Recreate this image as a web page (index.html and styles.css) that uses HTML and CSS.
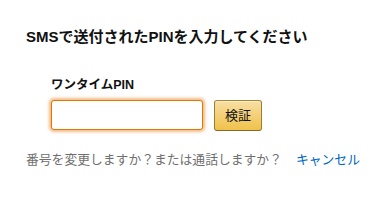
FILE: index.html
```html
<!DOCTYPE html>
<html lang="ja">
<head>
<meta charset="utf-8">
<link rel="stylesheet" href="styles.css">
</head>
<body>
<div class="page">
  <h1 class="title">SMSで送付されたPINを入力してください</h1>
  <div class="form">
    <label class="label" for="pin">ワンタイムPIN</label>
    <div class="row">
      <input id="pin" class="input" type="text">
      <button class="btn" type="button">検証</button>
    </div>
  </div>
  <p class="note">番号を変更しますか？または通話しますか？<a class="link" href="#">キャンセル</a></p>
</div>
</body>
</html>
```

FILE: styles.css
```css
html, body {
  margin: 0;
  padding: 0;
  background: #fff;
}
body {
  font-family: "Liberation Sans", "Noto Sans CJK JP", sans-serif;
  color: #111;
}
.page {
  padding: 27px 0 0 26px;
}
.title {
  margin: 0;
  font-size: 15px;
  line-height: 20px;
  font-weight: 700;
  color: #111;
}
.form {
  padding-left: 25px;
  margin-top: 30px;
}
.label {
  display: block;
  font-size: 12.5px;
  line-height: 16px;
  font-weight: 700;
  color: #111;
}
.row {
  display: flex;
  align-items: flex-start;
  gap: 11px;
  margin-top: 7px;
}
.input {
  box-sizing: border-box;
  width: 152px;
  height: 30px;
  margin: 0;
  border: 1px solid #e77600;
  border-radius: 3px;
  box-shadow: 0 0 3px 2px rgba(228, 121, 17, 0.5);
  outline: none;
  padding: 3px 7px;
  background: #fff;
}
.btn {
  box-sizing: border-box;
  width: 48px;
  height: 31px;
  margin: 0;
  padding: 0;
  border: 1px solid;
  border-color: #a88734 #9c7e31 #846a29;
  border-radius: 3px;
  background: linear-gradient(to bottom, #f7dfa5, #f0c14b);
  box-shadow: 0 1px 0 rgba(255, 255, 255, 0.4) inset;
  font-family: "Liberation Sans", "Noto Sans CJK JP", sans-serif;
  font-size: 13px;
  line-height: 29px;
  color: #111;
}
.note {
  margin: 20px 0 0;
  font-size: 12.8px;
  line-height: 18px;
  color: #6f6f6f;
}
.link {
  margin-left: 14px;
  color: #0066c0;
  text-decoration: none;
}
```
